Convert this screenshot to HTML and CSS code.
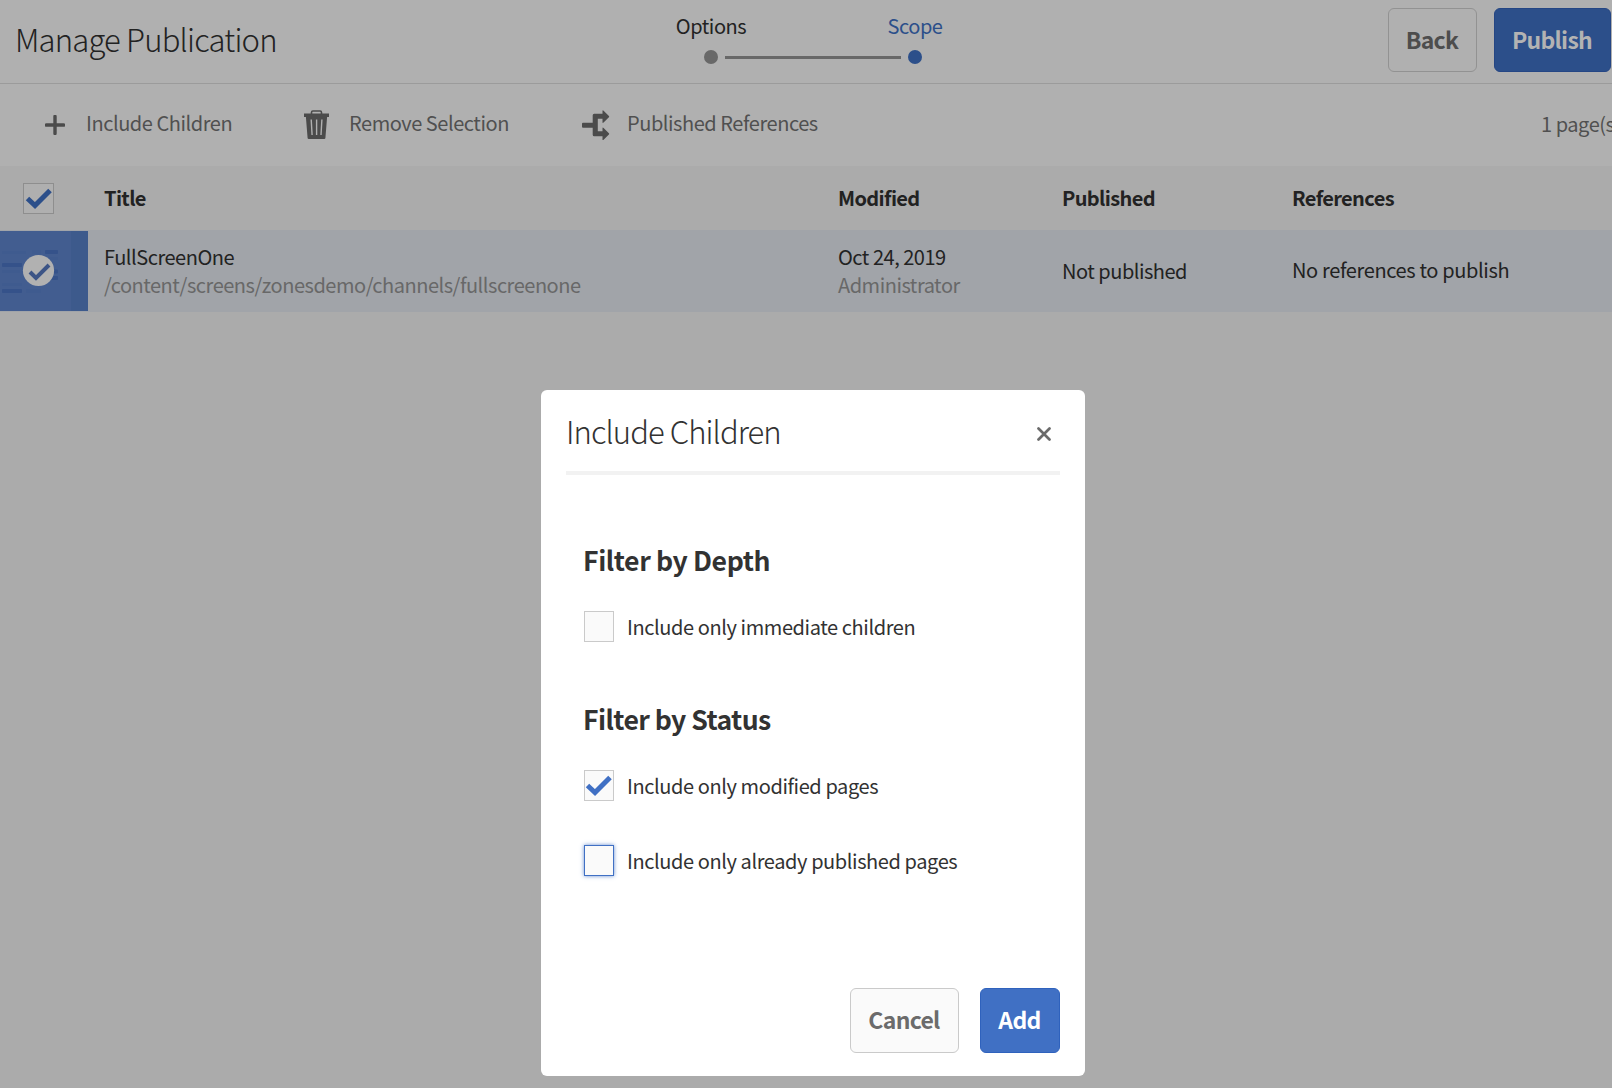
FILE: index.html
```html
<!DOCTYPE html>
<html lang="en">
<head>
<meta charset="utf-8">
<title>Manage Publication</title>
<link rel="stylesheet" href="styles.css">
</head>
<body>
<div class="page">
  <header class="header">
    <h1 class="title">Manage Publication</h1>
    <ol class="steps">
      <li class="step"><span class="step-label">Options</span><span class="dot"></span></li>
      <li class="step-line"></li>
      <li class="step step-active"><span class="step-label">Scope</span><span class="dot"></span></li>
    </ol>
    <div class="header-actions">
      <button class="btn btn-back">Back</button>
      <button class="btn btn-publish">Publish</button>
    </div>
  </header>

  <div class="toolbar">
    <button class="tool tool-add">
      <svg width="20" height="20" viewBox="0 0 20 20"><path d="M1.4 10h17.2M10 1.4v17.2" stroke="currentColor" stroke-width="3.4" stroke-linecap="round"/></svg>
      <span>Include Children</span>
    </button>
    <button class="tool tool-remove">
      <svg width="26" height="30" viewBox="0 0 26 30"><path d="M7.500 4V2.400Q7.500 1 8.900 1h7.200Q17.500 1 17.500 2.400V4" fill="none" stroke="currentColor" stroke-width="1.600"/><path fill="currentColor" fill-rule="evenodd" d="M0 3.600h25v3.300h-1.900L21.400 28q-.1 1-1.100 1H4.700q-1 0-1.100-1L1.900 6.900H0zM6.500 9.500l.9 15.500h1.400L7.900 9.500zM11.900 9.500v15.500h1.400V9.500zM17.200 9.500l-.9 15.500h1.400l.9-15.500z"/></svg>
      <span>Remove Selection</span>
    </button>
    <button class="tool tool-refs">
      <svg width="28" height="30" viewBox="0 0 28 30"><path fill="currentColor" d="M1 12.700h9.700V5.200q0-1.500 1.500-1.500h8.300V1.200q0-1.500 1.100-.4l5.300 5.300q.5.600 0 1.200l-5.300 5.300q-1.100 1-1.100-.4V8.700h-4.700v12.600h4.700v-2.900q0-1.500 1.100-.4l5.300 5.300q.5.600 0 1.200l-5.300 5.300q-1.100 1-1.100-.4v-3.100h-8.300q-1.500 0-1.500-1.500v-7.100H1q-1 0-1-1v-3q0-1 1-1z"/></svg>
      <span>Published References</span>
    </button>
    <span class="count">1 page(s)</span>
  </div>

  <div class="grid grid-head">
    <span class="checkbox checkbox-dim"><svg width="28" height="22" viewBox="0 0 28 22"><path d="M2.500 10.500l7.500 7L25 2.500" fill="none" stroke="currentColor" stroke-width="5"/></svg></span>
    <span>Title</span><span>Modified</span><span>Published</span><span>References</span>
  </div>
  <div class="grid grid-row">
    <span class="thumb">
      <svg width="88" height="80" viewBox="0 0 88 80">
        <rect width="88" height="80" fill="#3d5a8c"/>
        <rect width="71" height="80" fill="#425d90"/>
        <g fill="#35528a">
          <rect x="45" y="19" width="13" height="4" rx="1"/><rect x="2" y="32" width="20" height="4" rx="1"/>
          <rect x="50" y="38.500" width="8" height="4" rx="1"/><rect x="50" y="45" width="8" height="4" rx="1"/>
          <rect x="2" y="58" width="20" height="4" rx="1"/>
        </g>
        <g fill="#3f5b8f">
          <rect x="2" y="20" width="24" height="3"/><rect x="32" y="19" width="9" height="4"/><rect x="45" y="26" width="13" height="3"/>
          <rect x="2" y="39" width="18" height="3"/><rect x="2" y="52" width="20" height="3"/><rect x="26" y="58" width="15" height="4"/>
        </g>
        <circle cx="38.500" cy="39.500" r="15.600" fill="#b1b1b1"/>
        <path d="M30 41l6 6 13-13" fill="none" stroke="#3c5486" stroke-width="4"/>
      </svg>
    </span>
    <span class="cell"><span>FullScreenOne</span><span class="muted">/content/screens/zonesdemo/channels/fullscreenone</span></span>
    <span class="cell"><span>Oct 24, 2019</span><span class="muted">Administrator</span></span>
    <span class="cell">Not published</span>
    <span class="cell cell-refs">No references to publish</span>
  </div>
</div>

<div class="modal-layer">
  <section class="modal">
    <header class="modal-header">
      <h2 class="modal-title">Include Children</h2>
      <svg class="close" width="14" height="14" viewBox="0 0 14 14"><path d="M1.500 1.500l11 11M12.500 1.500l-11 11" stroke="#6b6b6b" stroke-width="2.700" stroke-linecap="round"/></svg>
    </header>
    <div class="modal-body">
      <h3 class="filter-title">Filter by Depth</h3>
      <label class="option"><span class="checkbox"></span><span>Include only immediate children</span></label>
      <h3 class="filter-title filter-status">Filter by Status</h3>
      <label class="option"><span class="checkbox"><svg width="28" height="22" viewBox="0 0 28 22"><path d="M2.500 10.500l7.500 7L25 2.500" fill="none" stroke="currentColor" stroke-width="5"/></svg></span><span>Include only modified pages</span></label>
      <label class="option option-last"><span class="checkbox checkbox-focus"></span><span>Include only already published pages</span></label>
    </div>
    <footer class="modal-footer">
      <button class="btn btn-cancel">Cancel</button>
      <button class="btn btn-add">Add</button>
    </footer>
  </section>
</div>
</body>
</html>
```
FILE: styles.css
```css
* { box-sizing: border-box; }

body {
  margin: 0;
  height: 1088px;
  overflow: hidden;
  background: #ababab;
  color: #222;
  font: 20px/28px "Noto Sans CJK SC", "Open Sans", sans-serif;
  letter-spacing: -0.45px;
  white-space: nowrap;
}

h1, h2, h3, ol { margin: 0; padding: 0; }
button { font: inherit; letter-spacing: inherit; cursor: pointer; }
svg { display: block; flex: none; }

/* Header */
.header {
  display: grid;
  grid-template-columns: 676px 1fr auto;
  height: 84px;
  background: #b0b0b0;
  border-bottom: 1px solid #9b9b9b;
}
.title {
  padding: 19px 0 0 15px;
  font-size: 31px;
  line-height: 40px;
  font-weight: 300;
  letter-spacing: -0.8px;
}
.steps { display: flex; padding-top: 12px; list-style: none; }
.step { display: flex; flex-direction: column; align-items: center; width: 70px; }
.step-active { width: 54px; color: #2c4f8a; }
.dot { width: 14px; height: 14px; margin-top: 10px; border-radius: 50%; background: #686868; }
.step-active .dot { background: #2c4f8a; }
.step-line { width: 176px; height: 3px; margin: 44px -13px 0 -21px; background: #686868; }
.header-actions { display: flex; gap: 17px; padding: 8px 1px 0 0; }

.btn {
  display: flex;
  align-items: center;
  justify-content: center;
  height: 64px;
  padding: 0 1px 3px 0;
  border: 1px solid #929292;
  border-radius: 6px;
  background: transparent;
  font-size: 23px;
  font-weight: 700;
  letter-spacing: -0.7px;
}
.btn-back { width: 89px; color: #4d4d4d; }
.btn-publish { width: 117px; color: #b3b3b3; background: #2c4f8a; border-color: #254684; }

/* Toolbar */
.toolbar {
  display: flex;
  align-items: center;
  height: 82px;
  padding-left: 45px;
  background: #b0b0b0;
}
.tool {
  display: flex;
  align-items: center;
  padding: 0;
  border: 0;
  background: none;
  color: #4b4b4b;
}
.tool span { padding-bottom: 5px; color: #505050; }
.tool-add { width: 259px; gap: 21px; }
.tool-remove { width: 278px; gap: 19px; }
.tool-refs { gap: 17px; }
.count { flex: none; width: 71px; margin-left: auto; padding-bottom: 3px; color: #505050; }

/* Page list */
.grid { display: grid; grid-template-columns: 104px 734px 224px 230px 1fr; align-items: center; }
.grid-head {
  height: 64px;
  padding-bottom: 1px;
  font-weight: 700;
  letter-spacing: -0.62px;
}
.grid-row {
  height: 82px;
  padding-bottom: 1px;
  background: #a1a4a9;
}
.cell { display: flex; flex-direction: column; padding-top: 1px; letter-spacing: -0.48px; }
.cell-refs { padding: 0 0 1px; letter-spacing: -0.36px; }
.muted { color: #686868; }

.checkbox {
  display: flex;
  align-items: center;
  justify-content: center;
  flex: none;
  width: 30px;
  height: 31px;
  border: 1px solid #cacaca;
  background: #fafafa;
  color: #4070c4;
}
.checkbox-dim { width: 31px; margin: 2px 0 0 23px; border-color: #8e8e8e; background: #afafaf; color: #2c4f8a; }
.checkbox-focus { border-color: #4070c4; box-shadow: 0 0 4px #4070c4cc; }

/* Dialog */
.modal-layer { position: absolute; inset: 0; padding: 390px 0 0 541px; }
.modal {
  display: flex;
  flex-direction: column;
  width: 544px;
  height: 686px;
  padding: 0 25px 23px;
  border-radius: 6px;
  background: #fff;
  color: #323232;
}
.modal-header {
  display: flex;
  align-items: center;
  justify-content: space-between;
  height: 85px;
  padding-right: 9px;
  border-bottom: 4px solid #f2f2f2;
}
.modal-title { font-size: 31px; line-height: 40px; font-weight: 300; letter-spacing: -0.92px; }
.close { margin-top: 6px; }
.modal-body { flex: 1; padding: 67px 0 0 18px; }
.filter-title { margin: 0 0 33px -1px; font-size: 26.6px; line-height: 36px; letter-spacing: -0.4px; }
.filter-status { margin-top: 59px; letter-spacing: -0.58px; }
.option { display: flex; align-items: center; gap: 13px; height: 31px; letter-spacing: -0.41px; }
.option-last { margin-top: 44px; }
.modal-footer { display: flex; justify-content: flex-end; gap: 21px; }
.modal-footer .btn { height: 65px; }
.btn-cancel { width: 109px; border-color: #cacaca; background: #fafafa; color: #6b6b6b; }
.btn-add { width: 80px; border-color: #2f62bd; background: #4070c4; color: #fff; }
```
